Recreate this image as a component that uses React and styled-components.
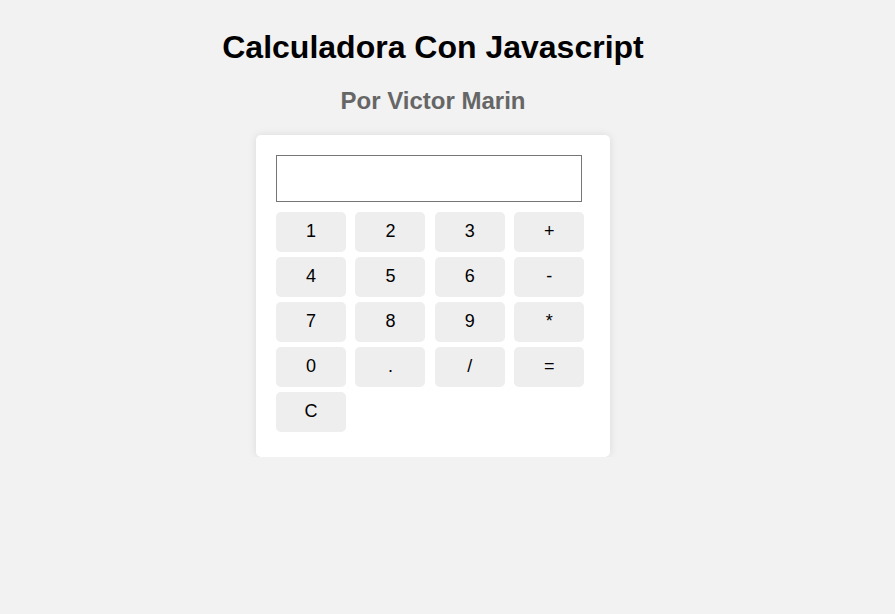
import React, { useState } from 'react';
import styled, { createGlobalStyle } from 'styled-components';

const GlobalStyle = createGlobalStyle`
  body {
    margin: 8px;
    background: #f2f2f2;
    font-family: "Liberation Sans", Arial, sans-serif;
  }
`;

const Page = styled.div`
  width: 850px;
  text-align: center;
`;

const Title = styled.h1`
  font-size: 32px;
  margin: 21.44px 0 20.44px;
  color: #000;
`;

const Subtitle = styled.h2`
  font-size: 24px;
  margin: 0 0 19.92px;
  color: #666;
`;

const Card = styled.div`
  display: inline-block;
  width: 314px;
  padding: 20px;
  background: #fff;
  border-radius: 5px;
  box-shadow: 0 0 8px rgba(0, 0, 0, 0.1);
  text-align: left;
`;

const Display = styled.input`
  box-sizing: border-box;
  display: block;
  width: 306px;
  height: 47px;
  margin: 0 0 10px;
  padding: 0 8px;
  border: 1px solid #767676;
  font-size: 24px;
  font-family: inherit;
  text-align: right;
`;

const Keys = styled.div`
  display: grid;
  grid-template-columns: repeat(4, 70px);
  column-gap: 9.4px;
`;

const Key = styled.button`
  height: 40px;
  margin-bottom: 5px;
  border: none;
  border-radius: 5px;
  background: #eee;
  color: #000;
  font-size: 18px;
  font-family: inherit;
  cursor: pointer;

  &:hover {
    background: #ddd;
  }
`;

const keys = ['1', '2', '3', '+', '4', '5', '6', '-', '7', '8', '9', '*', '0', '.', '/', '=', 'C'];

const App = () => {
  const [value, setValue] = useState('');

  const press = (k) => {
    if (k === 'C') return setValue('');
    if (k === '=') {
      try {
        // eslint-disable-next-line no-new-func
        setValue(String(Function(`return (${value})`)()));
      } catch (e) {
        setValue('Error');
      }
      return;
    }
    setValue(value + k);
  };

  return (
    <Page>
      <GlobalStyle />
      <Title>Calculadora Con Javascript</Title>
      <Subtitle>Por Victor Marin</Subtitle>
      <Card>
        <Display type="text" value={value} readOnly />
        <Keys>
          {keys.map((k) => (
            <Key key={k} onClick={() => press(k)}>{k}</Key>
          ))}
        </Keys>
      </Card>
    </Page>
  );
};

export default App;
